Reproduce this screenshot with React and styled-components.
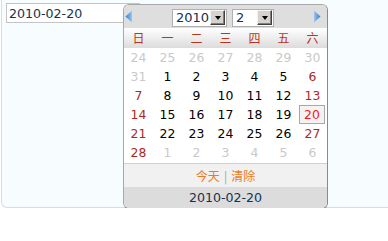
import React from 'react';
import styled, { createGlobalStyle } from 'styled-components';

const Global = createGlobalStyle`
  body {
    margin: 0;
    background: #fff;
    font-family: "DejaVu Sans", Verdana, sans-serif;
  }
`;

const Panel = styled.div`
  position: relative;
  margin: 0 0 0 1px;
  height: 207px;
  background: #f7fcfe;
  border: 1px solid #dcdcdc;
  border-top: none;
  border-right: none;
  border-radius: 0 0 0 6px;
`;

const DateInput = styled.div`
  position: absolute;
  left: 4px;
  top: 3px;
  width: 130px;
  height: 18px;
  box-sizing: content-box;
  background: #fff;
  border: 1px solid #c4c4c4;
  color: #13324f;
  font-size: 12.6px;
  line-height: 19px;
  padding-left: 2px;
`;

const Popup = styled.div`
  position: absolute;
  left: 121px;
  top: 4px;
  width: 203px;
  border: 1px solid #a8a8a8;
  border-right-color: #8a8a8a;
  border-bottom-color: #8a8a8a;
  border-radius: 6px;
  overflow: hidden;
  background: #fff;
`;

const Header = styled.div`
  height: 23px;
  display: flex;
  align-items: center;
  justify-content: space-between;
  padding: 0 6px 0 1px;
  background: #dedede;
`;

const Arrow = styled.svg`
  width: 8px;
  height: 13px;
  display: block;
`;

const Selects = styled.div`
  display: flex;
  gap: 5px;
  margin-top: 2px;
`;

const Select = styled.div`
  display: flex;
  align-items: center;
  justify-content: space-between;
  width: ${p => p.$w}px;
  height: 18px;
  box-sizing: border-box;
  background: #fff;
  border: 1px solid #b0b0b0;
  padding: 0 1px 0 3px;
  font-size: 13px;
  color: #13324f;
`;

const DropBtn = styled.span`
  width: 15px;
  height: 15px;
  box-sizing: border-box;
  background: #d6d3ce;
  border: 1px solid;
  border-color: #f4f4f4 #404040 #404040 #f4f4f4;
  box-shadow: inset -1px -1px 0 #808080;
  display: flex;
  align-items: center;
  justify-content: center;

  &::after {
    content: "";
    border-left: 3.5px solid transparent;
    border-right: 3.5px solid transparent;
    border-top: 4px solid #000;
  }
`;

const Grid = styled.div`
  display: grid;
  grid-template-columns: repeat(7, 29px);
`;

const WeekRow = styled(Grid)`
  height: 20px;
  background: linear-gradient(#ffffff, #dcdcdc);
  align-items: center;
`;

const WeekDay = styled.span`
  text-align: center;
  font-family: "Noto Sans CJK SC", sans-serif;
  font-size: 12px;
  line-height: 20px;
  color: #b8351c;
`;

const DayGrid = styled(Grid)`
  grid-auto-rows: 19px;
  padding-bottom: 1px;
`;

const colors = {
  other: '#c9c9c9',
  normal: '#000',
  weekend: '#a82a22',
  selected: '#f21a1a',
};

const Day = styled.span`
  display: flex;
  align-items: center;
  justify-content: center;
  font-size: 12.4px;
  color: ${p => colors[p.$kind]};
  ${p => p.$kind === 'selected' && `
    margin: 0 2px 0 1px;
    border: 1px solid #a8a8a8;
    background: #f3f3f3;
  `}
`;

const Footer = styled.div`
  height: 23px;
  border-top: 1px solid #cfcfcf;
  background: #f1f1f1;
  display: flex;
  align-items: center;
  justify-content: center;
  gap: 4px;
  font-family: "Noto Sans CJK SC", sans-serif;
  font-size: 12px;
  color: #ee7a1e;
`;

const Sep = styled.span`
  color: #a0a0a0;
`;

const Bottom = styled.div`
  height: 21px;
  background: #dcdcdc;
  display: flex;
  align-items: center;
  justify-content: center;
  font-size: 12.6px;
  color: #13324f;
`;

const weekNames = ['日', '一', '二', '三', '四', '五', '六'];

const buildDays = () => {
  const out = [];
  [24, 25, 26, 27, 28, 29, 30, 31].forEach(d => out.push({ d, kind: 'other' }));
  for (let d = 1; d <= 28; d++) out.push({ d, kind: 'normal' });
  for (let d = 1; d <= 6; d++) out.push({ d, kind: 'other' });
  return out.map((item, i) => {
    const col = i % 7;
    if (item.kind === 'normal' && (col === 0 || col === 6)) item.kind = 'weekend';
    if (i >= 8 && i < 36 && item.d === 20) item.kind = 'selected';
    return item;
  });
};

const LeftArrow = () => (
  <Arrow viewBox="0 0 8 13">
    <defs>
      <linearGradient id="la" x1="0" x2="1">
        <stop offset="0" stopColor="#2f7fd0" />
        <stop offset="1" stopColor="#9cc6ef" />
      </linearGradient>
    </defs>
    <path d="M7 0.5 L0.5 6.5 L7 12.5 Z" fill="url(#la)" />
  </Arrow>
);

const RightArrow = () => (
  <Arrow viewBox="0 0 8 13">
    <defs>
      <linearGradient id="ra" x1="0" x2="1">
        <stop offset="0" stopColor="#9cc6ef" />
        <stop offset="1" stopColor="#2f7fd0" />
      </linearGradient>
    </defs>
    <path d="M1 0.5 L7.5 6.5 L1 12.5 Z" fill="url(#ra)" />
  </Arrow>
);

export default function App() {
  const days = buildDays();
  return (
    <>
      <Global />
      <Panel>
        <DateInput>2010-02-20</DateInput>
        <Popup>
          <Header>
            <LeftArrow />
            <Selects>
              <Select $w={55}>2010<DropBtn /></Select>
              <Select $w={42}>2<DropBtn /></Select>
            </Selects>
            <RightArrow />
          </Header>
          <WeekRow>
            {weekNames.map(n => <WeekDay key={n}>{n}</WeekDay>)}
          </WeekRow>
          <DayGrid>
            {days.map((item, i) => (
              <Day key={i} $kind={item.kind}>{item.d}</Day>
            ))}
          </DayGrid>
          <Footer>
            <span>今天</span><Sep>|</Sep><span>清除</span>
          </Footer>
          <Bottom>2010-02-20</Bottom>
        </Popup>
      </Panel>
    </>
  );
}
